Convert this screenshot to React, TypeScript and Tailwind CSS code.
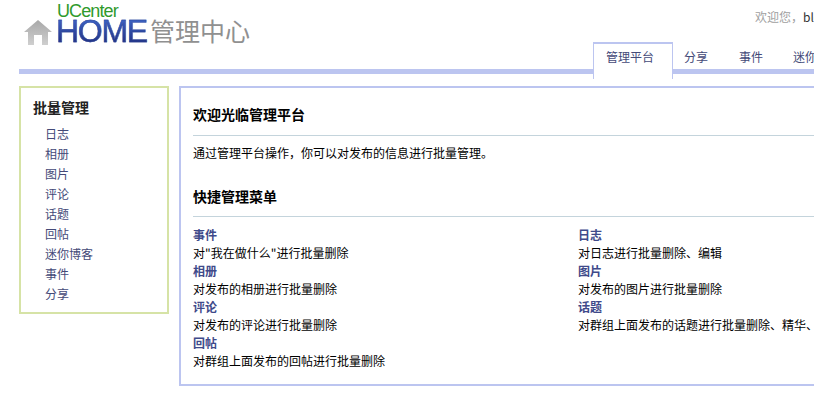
import React from "react";

const font = "font-['Noto_Sans_CJK_SC','Liberation_Sans',sans-serif]";

const sideLinks = ["日志", "相册", "图片", "评论", "话题", "回帖", "迷你博客", "事件", "分享"];

const quickItems = [
  { title: "事件", desc: "对\"我在做什么\"进行批量删除" },
  { title: "日志", desc: "对日志进行批量删除、编辑" },
  { title: "相册", desc: "对发布的相册进行批量删除" },
  { title: "图片", desc: "对发布的图片进行批量删除" },
  { title: "评论", desc: "对发布的评论进行批量删除" },
  { title: "话题", desc: "对群组上面发布的话题进行批量删除、精华、置顶" },
  { title: "回帖", desc: "对群组上面发布的回帖进行批量删除" },
];

function Logo() {
  return (
    <div className="flex items-end pl-[24px] pt-[4px]">
      <svg width="28" height="25" viewBox="0 0 28 25" className="shrink-0">
        <defs>
          <linearGradient id="house" x1="0" y1="0" x2="0" y2="1">
            <stop offset="0" stopColor="#a8a8a8" />
            <stop offset="1" stopColor="#cfcfcf" />
          </linearGradient>
        </defs>
        <path d="M14 0 L28 12 L24 12 L24 25 L18 25 L18 15 L10 15 L10 25 L4 25 L4 12 L0 12 Z" fill="url(#house)" />
      </svg>
      <div className="ml-[4px] flex w-[94px] flex-col">
        <span className="ml-[1px] h-[14px] font-['Liberation_Sans',sans-serif] text-[18px] leading-[14px] tracking-[-0.9px] text-[#2f9a2c]">
          UCenter
        </span>
        <span className="h-[27px] bg-gradient-to-b from-[#3f66c8] to-[#1f2f80] bg-clip-text font-['Liberation_Sans',sans-serif] text-[32px] leading-[27px] tracking-[-1.3px] text-transparent [-webkit-text-stroke:0.4px_#2c4296]">
          HOME
        </span>
      </div>
      <span className={`${font} h-[29px] text-[25px] leading-[29px] whitespace-nowrap text-[#909090]`}>
        管理中心
      </span>
    </div>
  );
}

export default function App() {
  return (
    <div className={`${font} h-[412px] w-[814px] overflow-hidden bg-white text-[12px] text-black`}>
      <div className="relative h-[69px]">
        <Logo />
        <div className="absolute top-[8px] left-[755px] whitespace-nowrap text-[#a0a0a0]">
          欢迎您，<span className="text-[#333]">blog</span>
        </div>
      </div>

      <div className="ml-[19px] h-[5px] bg-[#bcc5f0]"></div>

      <div className="relative">
        <div className="absolute top-[-32px] left-[593px] flex whitespace-nowrap text-[#444a78]">
          <div className="h-[37px] w-[80px] border-x border-t-2 border-[#bcc5f0] bg-white pt-[4px] pl-[12px]">管理平台</div>
          <div className="ml-[11px] pt-[6px]">分享</div>
          <div className="ml-[31px] pt-[6px]">事件</div>
          <div className="ml-[30px] pt-[6px]">迷你博客</div>
        </div>
      </div>

      <div className="mt-[12px] flex items-start pl-[19px]">
        <div className="h-[228px] w-[150px] shrink-0 border-2 border-[#d6e3a6] pt-[9px] pl-[12px]">
          <h2 className="text-[14px] leading-[20px] font-bold text-[#222]">批量管理</h2>
          <ul className="mt-[7px] pl-[12px] text-[#444a78]">
            {sideLinks.map((l) => (
              <li key={l} className="h-[20px] leading-[20px]">{l}</li>
            ))}
          </ul>
        </div>

        <div className="ml-[10px] h-[300px] w-[640px] shrink-0 border-y-2 border-l-2 border-[#bcc5f0] pt-[16px] pl-[12px]">
          <h2 className="text-[14px] leading-[20px] font-bold">欢迎光临管理平台</h2>
          <div className="mt-[11px] h-px bg-[#c4d4dc]"></div>
          <p className="mt-[8px] leading-[18px]">通过管理平台操作，你可以对发布的信息进行批量管理。</p>
          <h2 className="mt-[24px] text-[14px] leading-[20px] font-bold">快捷管理菜单</h2>
          <div className="mt-[10px] h-px bg-[#c4d4dc]"></div>
          <div className="mt-[9px] grid grid-cols-[385px_1fr]">
            {quickItems.map((q) => (
              <div key={q.title} className="h-[36px] whitespace-nowrap leading-[18px]">
                <div className="font-bold text-[#3f4a8a]">{q.title}</div>
                <div>{q.desc}</div>
              </div>
            ))}
          </div>
        </div>
      </div>
    </div>
  );
}
